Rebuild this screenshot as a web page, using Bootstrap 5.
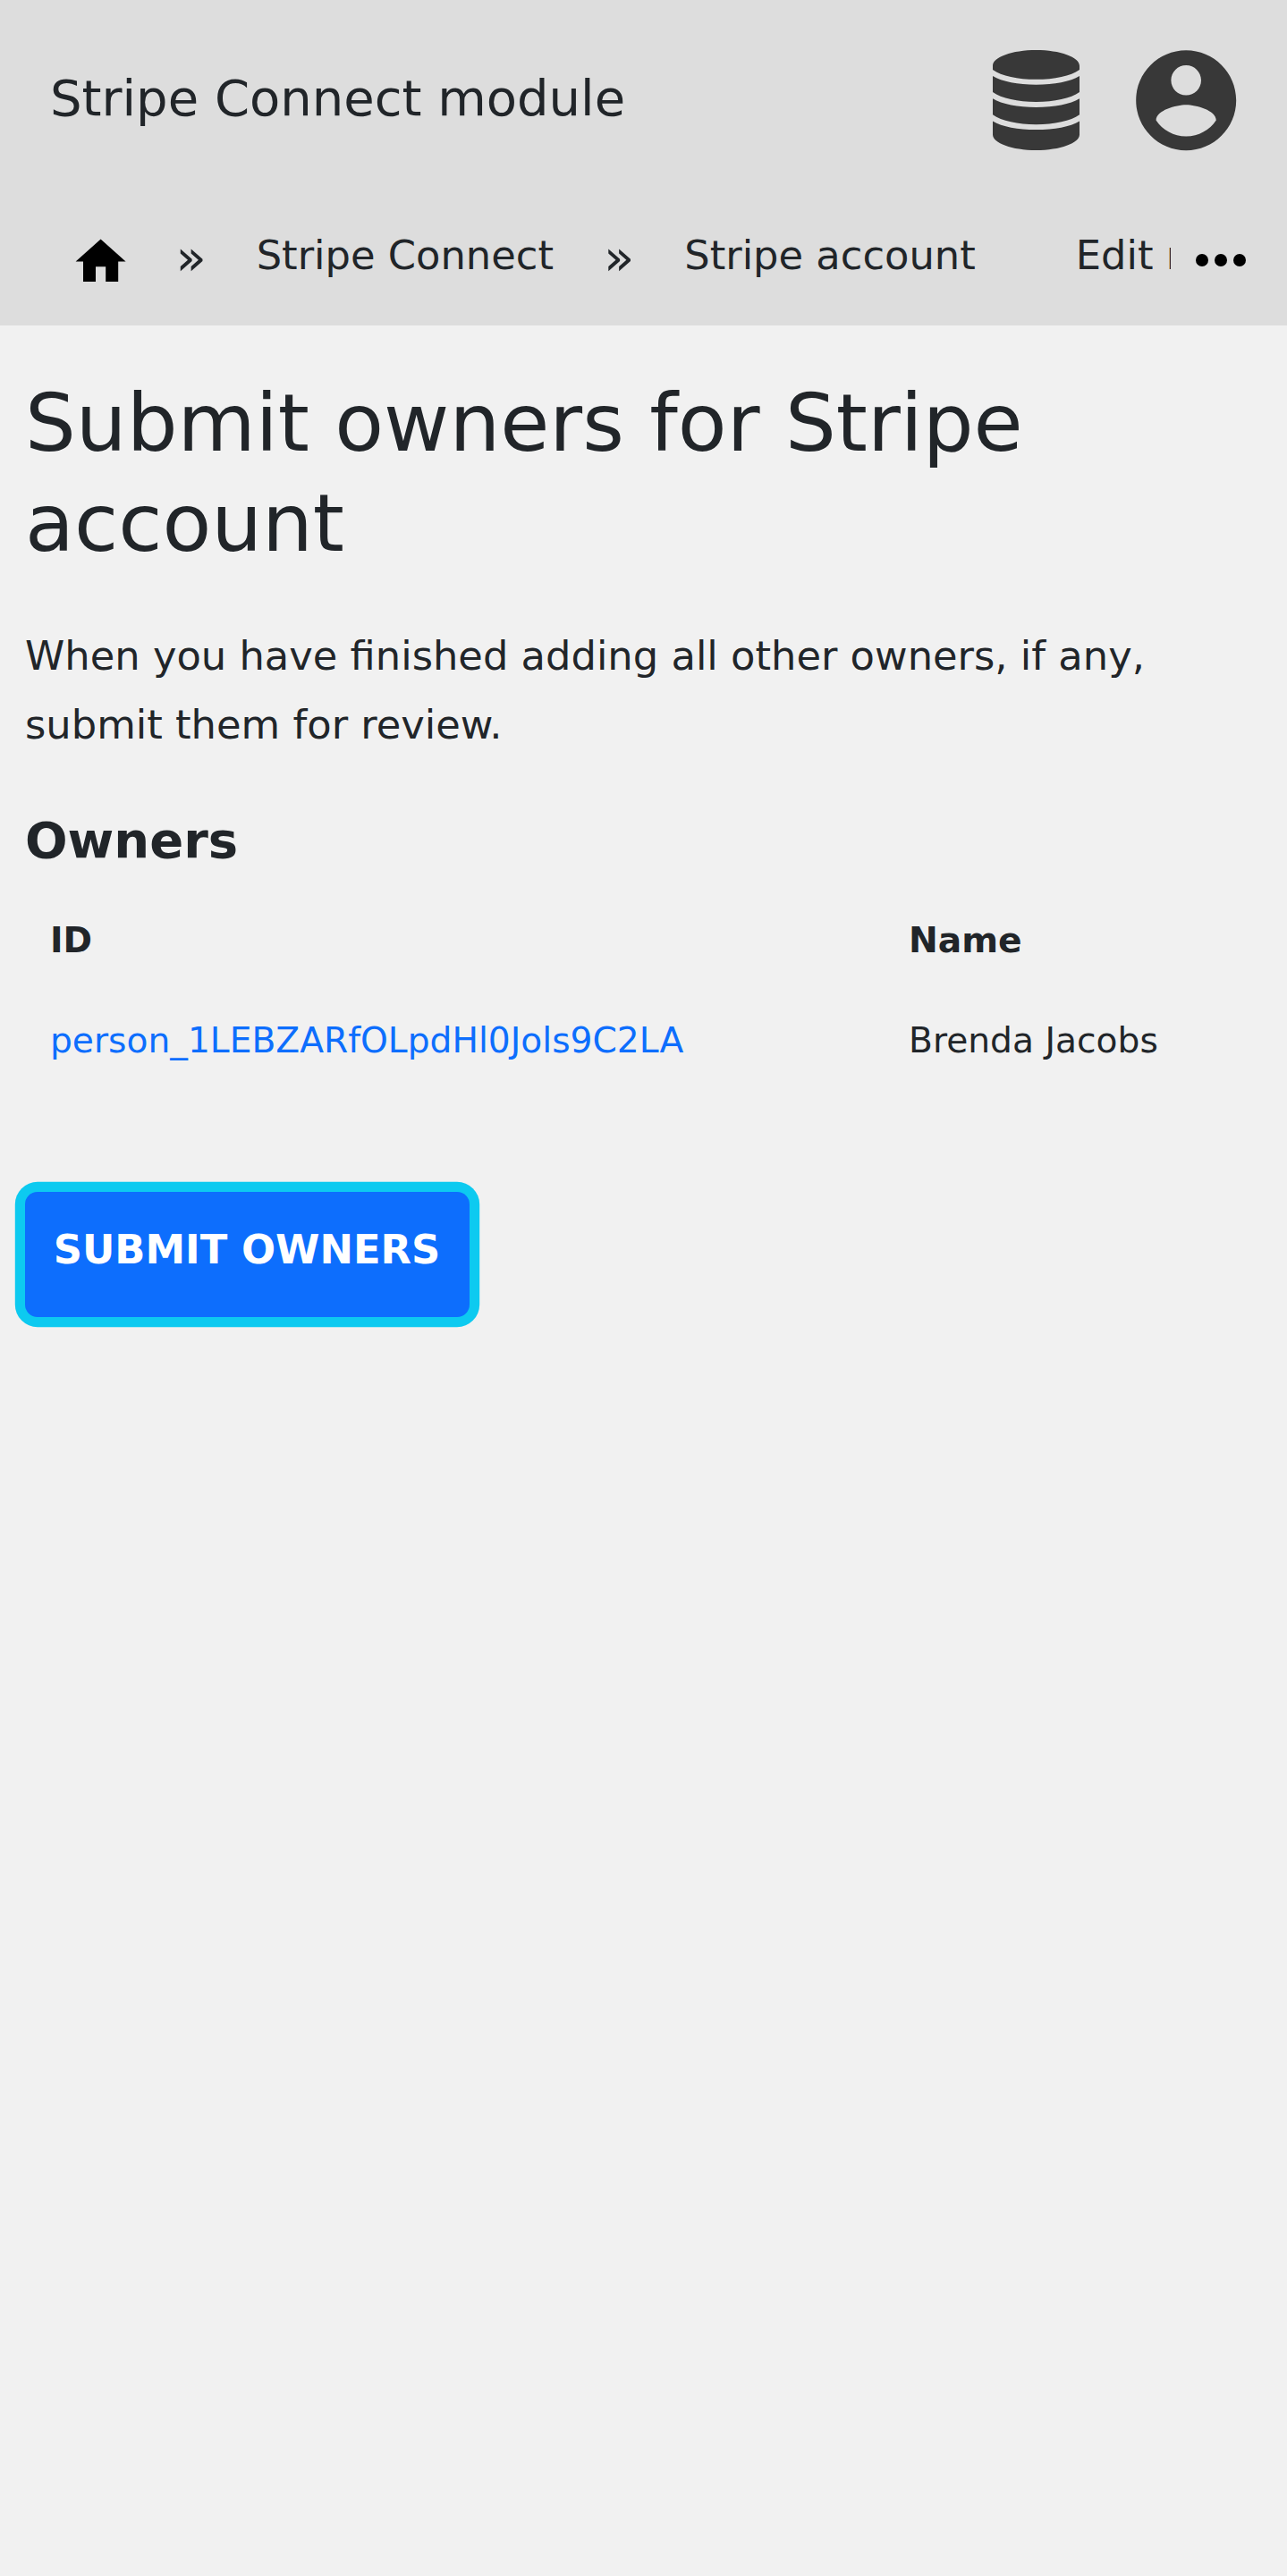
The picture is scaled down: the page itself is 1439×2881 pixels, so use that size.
<!DOCTYPE html>
<html lang="en">
<head>
<meta charset="utf-8">
<meta name="viewport" content="width=device-width, initial-scale=1">
<title>Submit owners for Stripe account</title>
<link href="https://cdn.jsdelivr.net/npm/bootstrap@5.3.0/dist/css/bootstrap.min.css" rel="stylesheet">
<style>
body { font-family: "DejaVu Sans", sans-serif; font-size: 44.8px; color: #212529; background: #f1f1f1; min-height: 2881px; }
.site-header { background: #ddd; height: 364px; }
.title-bar { height: 224px; padding: 0 45.400px 0 56px; }
.site-title { font-size: 56px; line-height: 84px; padding-bottom: 5px; }
.title-icons { gap: 52px; color: #383838; }
.trail { height: 140px; }
.trail-items { width: 1309px; padding-left: 78.800px; height: 123px; white-space: nowrap; }
.trail-items > * + * { margin-left: 56px; }
.trail-items > .trail-first { margin-left: 50.400px; }
.trail-items > .trail-last { margin-left: 112px; }
.trail-home { margin-top: 14px; }
.trail-sep { font-size: 56px; line-height: 60px; padding-top: 5px; }
.trail-more { margin: 25px 0 0 14px; }
.page-title { font-size: 89.6px; line-height: 112px; font-weight: 400; margin: 0 0 54px; }
.page-main { padding: 53px 28px 0; }
.intro { line-height: 77px; margin: 0 0 53px; }
.section-title { font-size: 56px; line-height: 75px; font-weight: 700; margin: 0 0 19px; }
.owners { font-size: 39.2px; line-height: 56px; margin-bottom: 113px; --bs-table-bg: transparent; color: #212529; }
.owners > :not(caption) > * > * { padding: 28px; border: 0; color: #212529; }
.owners .id-col { width: 960px; }
.btn-submit { font-size: 44.8px; line-height: 76px; font-weight: 700; padding: 27px 1px 37px 0; width: 497px; border: 0; border-radius: 14px; background: #0d6efd; box-shadow: 0 0 0 11.2px #0dcaf0; display: block; }
</style>
<script src="https://cdn.jsdelivr.net/npm/bootstrap@5.3.0/dist/js/bootstrap.bundle.min.js"></script>
</head>
<body>
<header class="site-header">
  <div class="title-bar d-flex align-items-center justify-content-between">
    <div class="site-title">Stripe Connect module</div>
    <div class="title-icons d-flex align-items-center">
      <svg width="97" height="112" viewBox="0 0 448 512" preserveAspectRatio="none" fill="currentColor" aria-label="Database"><path d="M0 80C0 36 100 0 224 0s224 36 224 80v20c-45 32-130 50-224 50S45 132 0 100zM0 133c48 29 130 44 224 44s176-15 224-44v82c-45 32-130 50-224 50S45 247 0 215zM0 248c48 29 130 44 224 44s176-15 224-44v82c-45 32-130 50-224 50S45 362 0 330zM0 363c48 29 130 44 224 44s176-15 224-44v69c0 44-100 80-224 80S0 476 0 432z"/></svg>
      <svg width="134.400" height="134.400" viewBox="0 0 24 24" fill="currentColor" aria-label="Account"><path d="M12 2C6.480 2 2 6.480 2 12s4.480 10 10 10 10-4.480 10-10S17.520 2 12 2zm0 3c1.660 0 3 1.340 3 3s-1.340 3-3 3-3-1.340-3-3 1.340-3 3-3zm0 14.200c-2.500 0-4.710-1.280-6-3.220.03-1.990 4-3.080 6-3.080 1.990 0 5.970 1.090 6 3.080-1.290 1.940-3.500 3.220-6 3.220z"/></svg>
    </div>
  </div>
  <nav class="trail d-flex" aria-label="breadcrumb">
    <div class="trail-items d-flex align-items-center overflow-hidden flex-shrink-0">
      <svg class="trail-home flex-shrink-0" width="67.200" height="67.200" viewBox="0 0 24 24" aria-label="Home"><path d="M10 20v-6h4v6h5v-8h3L12 3 2 12h3v8z"/></svg>
      <span class="trail-sep trail-first">»</span>
      <span>Stripe Connect</span>
      <span class="trail-sep">»</span>
      <span>Stripe account</span>
      <span class="trail-last">Edit registration</span>
    </div>
    <svg class="trail-more flex-shrink-0" width="84" height="84" viewBox="0 0 24 24" aria-label="More"><circle cx="6" cy="12" r="2"/><circle cx="12" cy="12" r="2"/><circle cx="18" cy="12" r="2"/></svg>
  </nav>
</header>
<main class="page-main">
  <h1 class="page-title">Submit owners for Stripe account</h1>
  <p class="intro">When you have finished adding all other owners, if any, submit them for review.</p>
  <h2 class="section-title">Owners</h2>
  <table class="table owners">
    <thead><tr><th class="id-col">ID</th><th>Name</th></tr></thead>
    <tbody><tr><td><a href="#" class="text-decoration-none">person_1LEBZARfOLpdHl0Jols9C2LA</a></td><td>Brenda Jacobs</td></tr></tbody>
  </table>
  <button type="button" class="btn btn-primary btn-submit">SUBMIT OWNERS</button>
</main>
</body>
</html>
